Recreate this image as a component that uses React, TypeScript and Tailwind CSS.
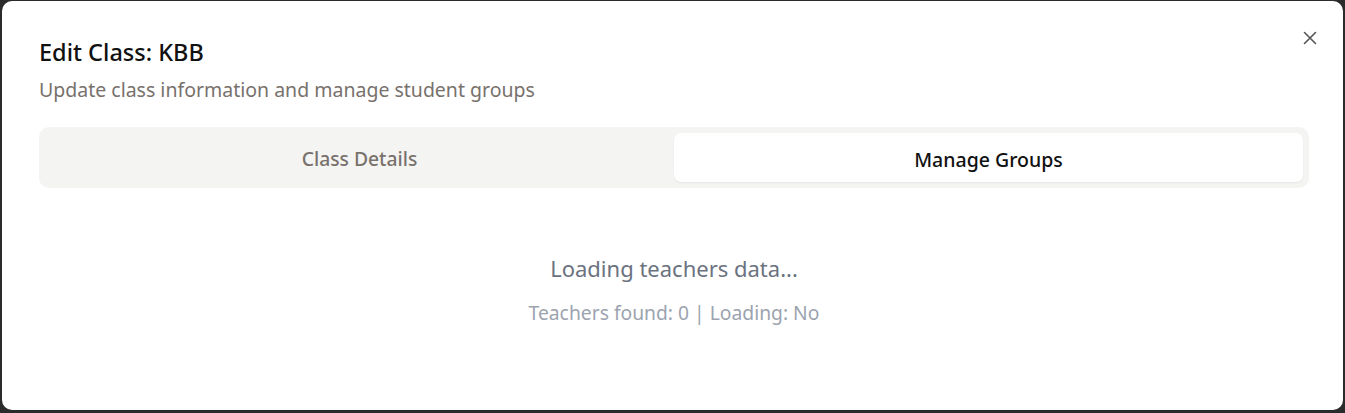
import React from 'react';

const font = { fontFamily: '"Noto Sans", "Open Sans", sans-serif' };

export default function App() {
    return (
        <div className="w-[1345px] h-[413px] bg-[#2b2b2b] pl-[2px] pr-[2px] pt-[1px] pb-[3px]" style={font}>
            <div className="relative h-full w-full bg-white rounded-[10px] pl-[37px] pr-[34px] pt-[36px]">
                <button className="absolute right-[25px] top-[29px] text-[#555] w-[16px] h-[16px] flex items-center justify-center">
                    <svg width="16" height="16" viewBox="0 0 16 16" fill="none" stroke="currentColor" strokeWidth="1.6" strokeLinecap="round">
                        <path d="M2.5 2.5l11 11M13.5 2.5l-11 11" />
                    </svg>
                </button>

                <h2 className="text-[23.5px] leading-[30px] font-medium text-[#111]">Edit Class: KBB</h2>
                <p className="mt-[10px] text-[19.5px] leading-[26px] text-[#78716c]">Update class information and manage student groups</p>

                <div className="mt-[24px] h-[61px] bg-[#f4f4f3] rounded-[10px] p-[6px] grid grid-cols-2">
                    <div className="flex items-center justify-center pt-[4px] text-[19.3px] font-medium text-[#78716c]">Class Details</div>
                    <div className="flex items-center justify-center pt-[4px] text-[19.5px] font-medium text-[#111] bg-white rounded-[7px] shadow-[0_1px_2px_rgba(0,0,0,0.06)]">Manage Groups</div>
                </div>

                <div className="flex flex-col items-center pt-[65px]">
                    <div className="text-[22px] leading-[30px] text-[#6b7280]">Loading teachers data...</div>
                    <div className="mt-[18px] text-[19.3px] leading-[24px] text-[#9ca3af]">Teachers found: 0 | Loading: No</div>
                </div>
            </div>
        </div>
    );
}
